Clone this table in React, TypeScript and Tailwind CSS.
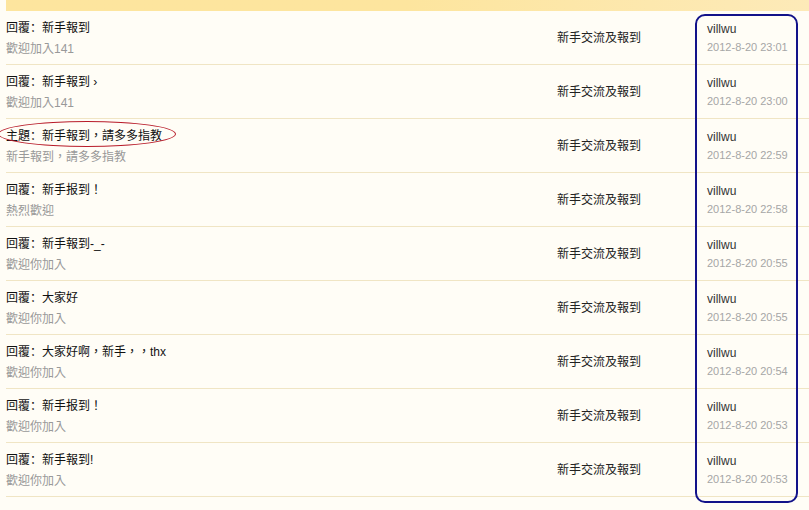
const rows = [
  { kind: "回覆", title: "新手報到", sub: "歡迎加入141", date: "2012-8-20 23:01" },
  { kind: "回覆", title: "新手報到 ›", sub: "歡迎加入141", date: "2012-8-20 23:00" },
  { kind: "主題", title: "新手報到，請多多指教", sub: "新手報到，請多多指教", date: "2012-8-20 22:59" },
  { kind: "回覆", title: "新手报到！", sub: "熱烈歡迎", date: "2012-8-20 22:58" },
  { kind: "回覆", title: "新手報到-_-", sub: "歡迎你加入", date: "2012-8-20 20:55" },
  { kind: "回覆", title: "大家好", sub: "歡迎你加入", date: "2012-8-20 20:55" },
  { kind: "回覆", title: "大家好啊，新手，，thx", sub: "歡迎你加入", date: "2012-8-20 20:54" },
  { kind: "回覆", title: "新手报到！", sub: "歡迎你加入", date: "2012-8-20 20:53" },
  { kind: "回覆", title: "新手報到!", sub: "歡迎你加入", date: "2012-8-20 20:53" },
];

export default function App() {
  return (
    <div
      className="relative w-[809px] h-[510px] overflow-hidden bg-[#fffdf6] text-[12px]"
      style={{ fontFamily: '"Liberation Sans", "Noto Sans CJK TC", sans-serif' }}
    >
      <div className="ml-[6px] h-[11px] bg-gradient-to-r from-[#fde59e] via-[#fde59e] to-[#fdeab8]" />

      {rows.map((r, i) => (
        <div key={i} className="flex h-[54px] border-b border-[#f0e5c4] ml-[6px]">
          <div className="w-[551px] flex flex-col pt-[5px] leading-[21px]">
            <div className="text-[#111]">
              {r.kind}
              <span style={{ fontFamily: '"Noto Sans CJK SC", sans-serif' }}>：</span>
              {r.title}
            </div>
            <div className="text-[#999]">{r.sub}</div>
          </div>
          <div className="w-[150px] flex items-center text-[#222]">新手交流及報到</div>
          <div className="flex flex-col pt-[9px] leading-[18px]">
            <div className="text-[#333]">villwu</div>
            <div className="text-[11px] text-[#a6a6a6]">{r.date}</div>
          </div>
        </div>
      ))}

      {/* annotation marks */}
      <div className="absolute left-[-2px] top-[121px] w-[178px] h-[26px] rounded-[50%] border border-[#b81c2a]" />
      <div className="absolute left-[695px] top-[14px] w-[103px] h-[489px] rounded-[10px] border-2 border-[#12128a]" />
    </div>
  );
}
